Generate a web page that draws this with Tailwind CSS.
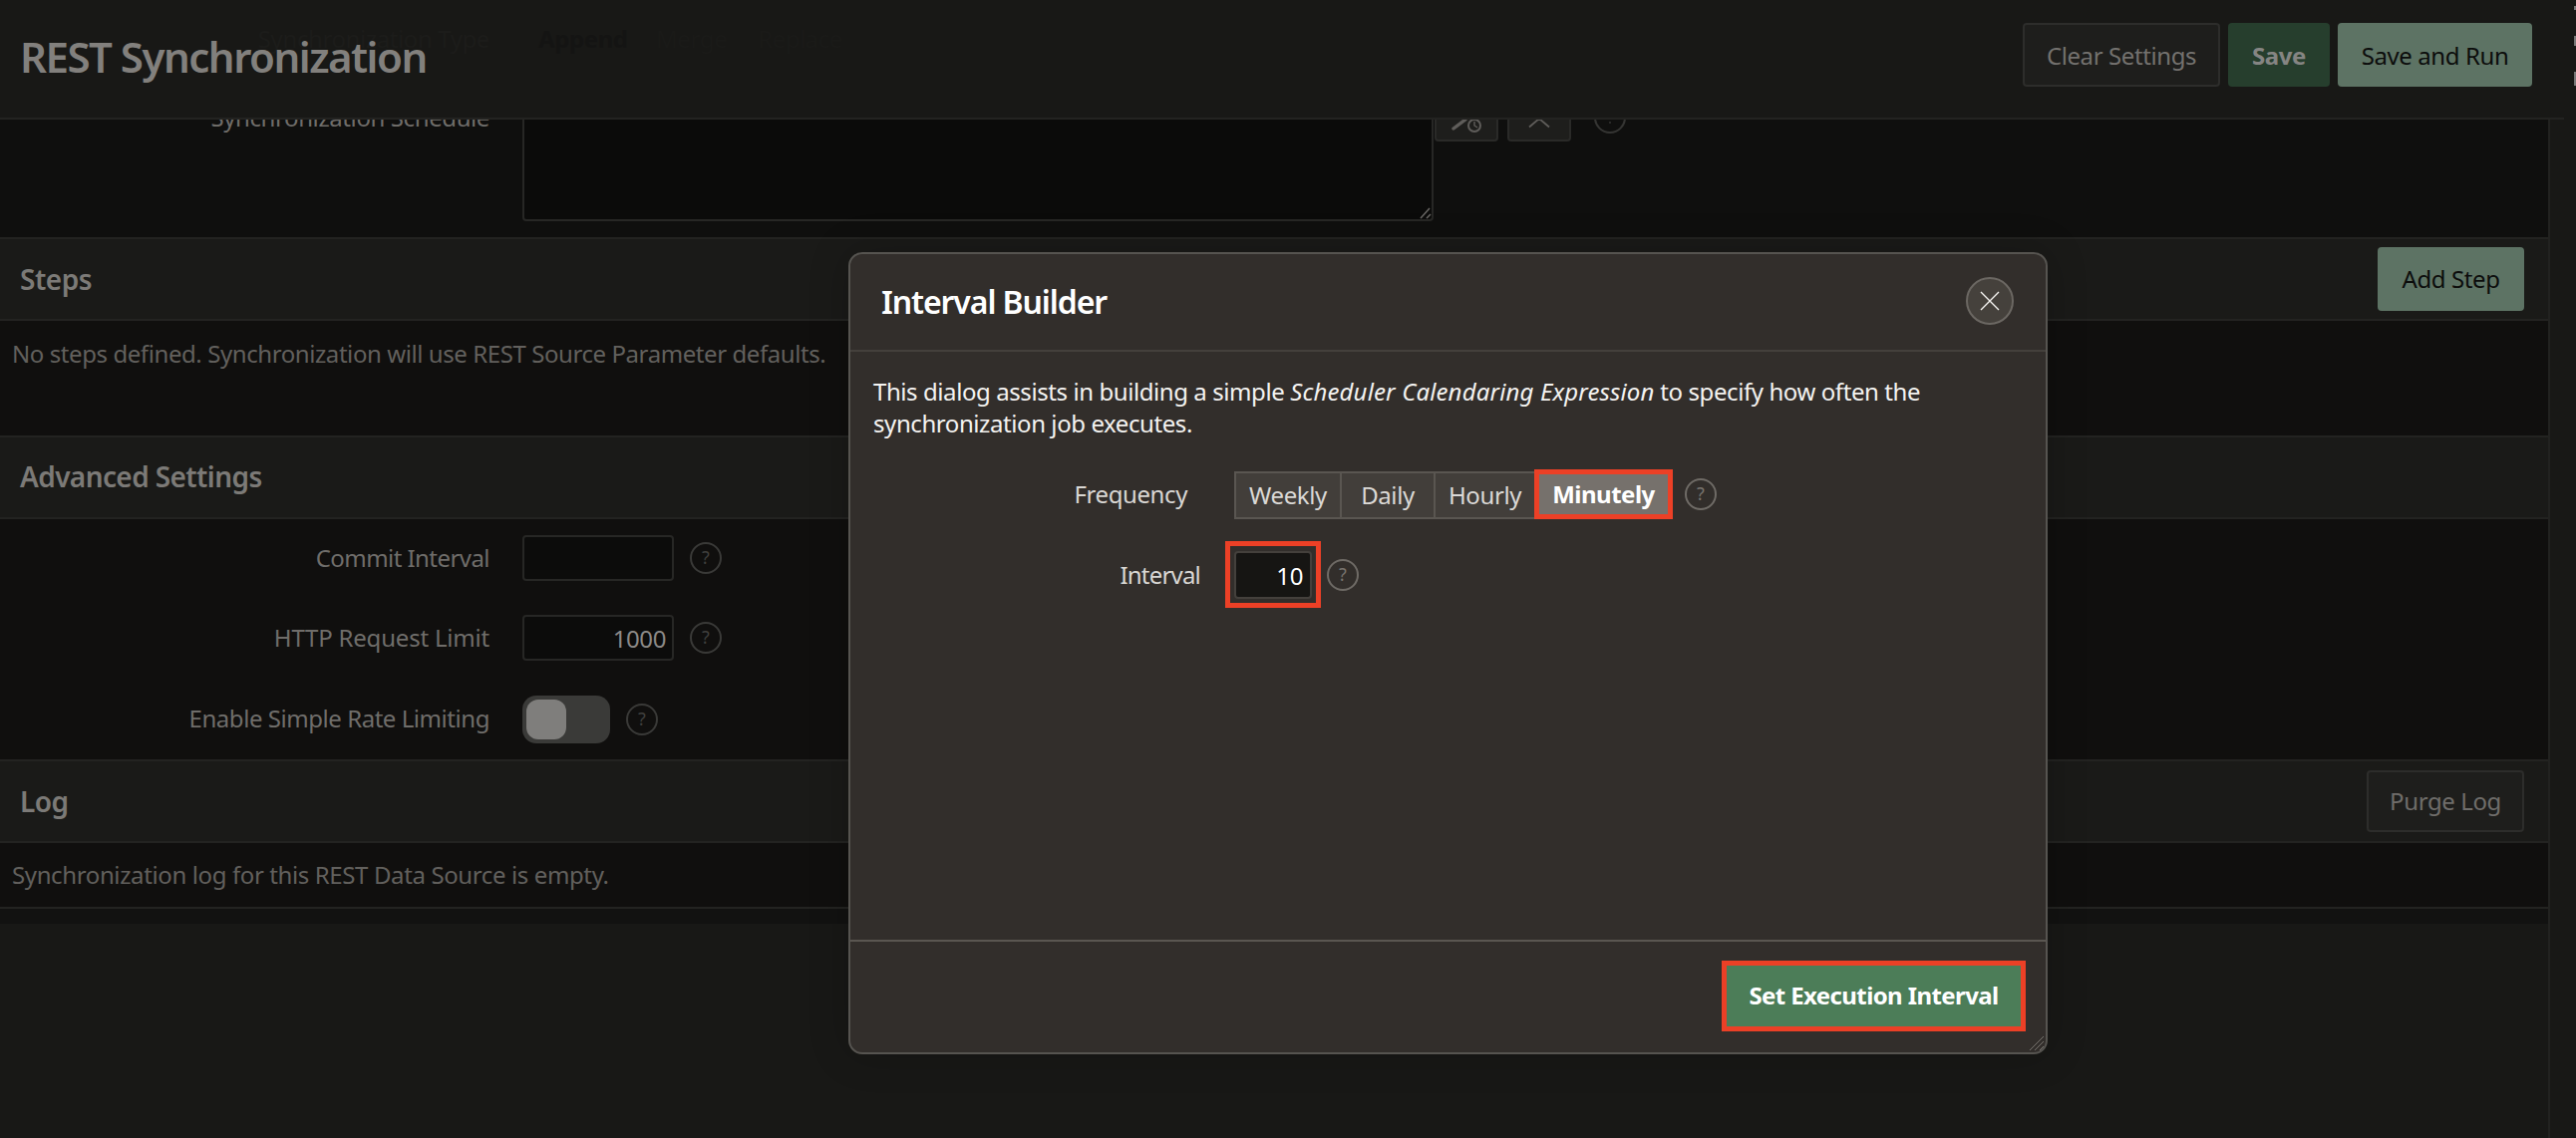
<!DOCTYPE html>
<html lang="en">
<head>
<meta charset="utf-8">
<title>Interval Builder</title>
<script src="https://cdn.jsdelivr.net/npm/@tailwindcss/browser@4"></script>
</head>
<body class="m-0 bg-[#181816] font-['Noto_Sans','Open_Sans',sans-serif]">
<div class="relative w-[2584px] h-[1142px] overflow-hidden bg-[#181816]">

  <!-- Page behind the dialog -->
  <main class="flex flex-col w-[2558px] h-[1142px] border-r-2 border-[#222220] bg-[#181816]">
    <div class="h-[120px] shrink-0"></div>

    <section class="h-[118px] shrink-0 bg-[#0f0f0e] flex">
      <div class="w-[491px] -mt-[14px] text-right text-[24px] leading-[24px] text-[#6f6d6a] tracking-[-0.4px]">Synchronization Schedule</div>
      <div class="ml-[33px] w-[914px] h-[102px] rounded-b-[4px] border-x-2 border-b-2 border-[#272725] bg-[#0b0b0a] relative">
        <svg class="absolute right-0 bottom-0" width="14" height="14" viewBox="0 0 14 14"><path d="M3 13 12 3M9 13l4-4" stroke="#6a6865" stroke-width="1.5"/></svg>
      </div>
      <div class="flex gap-[9px] ml-[1px] h-[22px]">
        <div class="w-[64px] h-full rounded-b-[4px] border-x-2 border-b-2 border-[#2a2a28] bg-[#1e1e1c] flex justify-center">
          <svg width="44" height="20" viewBox="0 0 44 20" fill="none" stroke="#5f5d5a" stroke-width="2"><path d="M9 9 21 0" stroke-width="3.4" stroke-linecap="round"/><circle cx="30" cy="6" r="6"/><path d="M30 2v4l3 2" stroke-width="1.4"/></svg>
        </div>
        <div class="w-[64px] h-full rounded-b-[4px] border-x-2 border-b-2 border-[#2a2a28] bg-[#1e1e1c] flex justify-center">
          <svg width="24" height="20" viewBox="0 0 24 20" fill="none" stroke="#5f5d5a" stroke-width="1.8"><path d="M2 7.500 12 -1l10 8.500"/></svg>
        </div>
        <svg class="ml-[14px]" width="32" height="22" viewBox="0 0 32 22" fill="none" stroke="#353533" stroke-width="2"><circle cx="16" cy="-2" r="15"/><circle cx="16" cy="3" r="1" fill="#353533" stroke="none"/></svg>
      </div>
    </section>

    <section class="h-[84px] shrink-0 bg-[#1a1a18] border-y-2 border-[#232321] flex items-center justify-between pl-[20px] pr-[24px]">
      <h2 class="text-[28px] font-semibold text-[#7c7a77] tracking-[-0.5px]">Steps</h2>
      <button class="w-[147px] h-[64px] pb-[1px] rounded-[4px] bg-[#5d7364] text-[24px] text-[#0c0d0c] tracking-[-0.4px]">Add Step</button>
    </section>
    <section class="h-[115px] shrink-0 bg-[#100f0e] pl-[12px] pt-[16px]">
      <p class="text-[24px] leading-[34px] text-[#62605d] tracking-[-0.42px]">No steps defined. Synchronization will use REST Source Parameter defaults.</p>
    </section>

    <section class="h-[84px] shrink-0 bg-[#1a1a18] border-y-2 border-[#232321] flex items-center pl-[20px] pb-[2px]">
      <h2 class="text-[28px] font-semibold text-[#7c7a77] tracking-[-0.6px]">Advanced Settings</h2>
    </section>
    <section class="h-[241px] shrink-0 bg-[#100f0e] pt-[16px] flex flex-col">
      <div class="flex items-center h-[46px]">
        <label class="w-[491px] text-right text-[24px] text-[#6f6d6a] tracking-[-0.55px]">Commit Interval</label>
        <div class="ml-[33px] w-[152px] h-[46px] rounded-[4px] border-2 border-[#272725] bg-[#0c0c0b]"></div>
        <svg class="ml-[16px]" width="32" height="32" viewBox="0 0 32 32" fill="none"><circle cx="16" cy="16" r="15" stroke="#3a3a38" stroke-width="2"/><text x="16" y="22" text-anchor="middle" font-size="18" fill="#3f3f3d" font-family="Noto Sans">?</text></svg>
      </div>
      <div class="flex items-center h-[46px] mt-[34px]">
        <label class="w-[491px] text-right text-[24px] text-[#6f6d6a] tracking-[-0.2px]">HTTP Request Limit</label>
        <div class="ml-[33px] w-[152px] h-[46px] rounded-[4px] border-2 border-[#272725] bg-[#0c0c0b] text-right pr-[6px] text-[24px] leading-[44px] text-[#8c8a87] tracking-[-0.4px]">1000</div>
        <svg class="ml-[16px]" width="32" height="32" viewBox="0 0 32 32" fill="none"><circle cx="16" cy="16" r="15" stroke="#3a3a38" stroke-width="2"/><text x="16" y="22" text-anchor="middle" font-size="18" fill="#3f3f3d" font-family="Noto Sans">?</text></svg>
      </div>
      <div class="flex items-center h-[48px] mt-[35px]">
        <label class="w-[491px] mb-[3px] text-right text-[24px] text-[#6f6d6a] tracking-[-0.45px]">Enable Simple Rate Limiting</label>
        <div class="ml-[33px] w-[88px] h-[48px] rounded-[14px] bg-[#3a3a38] p-[4px]">
          <div class="w-[40px] h-[40px] rounded-[12px] bg-[#7f7e7c]"></div>
        </div>
        <svg class="ml-[16px]" width="32" height="32" viewBox="0 0 32 32" fill="none"><circle cx="16" cy="16" r="15" stroke="#3a3a38" stroke-width="2"/><text x="16" y="22" text-anchor="middle" font-size="18" fill="#3f3f3d" font-family="Noto Sans">?</text></svg>
      </div>
    </section>

    <section class="h-[84px] shrink-0 bg-[#1a1a18] border-y-2 border-[#232321] flex items-center justify-between pl-[20px] pr-[24px]">
      <h2 class="text-[28px] font-semibold text-[#7c7a77] tracking-[-0.5px]">Log</h2>
      <button class="w-[158px] h-[62px] rounded-[4px] border-2 border-[#2d2d2b] bg-[#1e1e1c] text-[24px] text-[#6f6d6a] tracking-[-0.4px]">Purge Log</button>
    </section>
    <section class="h-[66px] shrink-0 bg-[#100f0e] border-b-2 border-[#232321] pl-[12px] pt-[15px]">
      <p class="text-[24px] leading-[34px] text-[#62605d] tracking-[-0.38px]">Synchronization log for this REST Data Source is empty.</p>
    </section>
    <div class="h-[15px] shrink-0 bg-[#121211]"></div>
  </main>

  <!-- Fixed header over the scrolled page -->
  <header class="absolute left-0 top-0 w-[2572px] h-[120px] bg-[#181816] border-b-2 border-[#232321] flex items-center justify-between pl-[20px] pr-[32px]">
    <div class="absolute left-[200px] top-[21px] w-[291px] whitespace-nowrap text-right text-[24px] text-[#1c1c1a] tracking-[-0.4px]">Synchronization Type</div>
    <div class="absolute left-[540px] top-[21px] flex text-[24px] tracking-[-0.4px]">
      <span class="w-[118px] font-bold text-[#141413]">Append</span>
      <span class="w-[102px] text-[#1a1a18]">Merge</span>
      <span class="text-[#1a1a18]">Replace</span>
    </div>
    <h1 class="relative text-[42px] font-semibold text-[#82807d] tracking-[-1.5px] leading-none -mt-[4px]">REST Synchronization</h1>
    <div class="flex gap-[8px] -mt-[8px]">
      <button class="w-[198px] h-[64px] pt-[1px] rounded-[4px] border-2 border-[#2d2d2b] bg-[#1e1e1c] text-[24px] text-[#73716e] tracking-[-0.4px]">Clear Settings</button>
      <button class="w-[102px] h-[64px] pt-[1px] rounded-[4px] bg-[#263e2d] text-[24px] font-bold text-[#858583] tracking-[-0.4px]">Save</button>
      <button class="w-[195px] h-[64px] pt-[1px] rounded-[4px] bg-[#5d7364] text-[24px] text-[#0c0d0c] tracking-[-0.4px]">Save and Run</button>
    </div>
  </header>

  <!-- Right edge clipped page text -->
  <div class="absolute left-[2582px] top-[6px] w-[2px] h-[160px] flex flex-col gap-[26px]">
    <span class="block w-[2px] h-[4px] bg-[#777]"></span>
    <span class="block w-[2px] h-[10px] bg-[#777]"></span>
    <span class="block w-[2px] h-[14px] bg-[#777]"></span>
  </div>

  <!-- Dialog -->
  <div role="dialog" class="absolute left-[851px] top-[253px] w-[1203px] h-[805px] rounded-[14px] border-2 border-[#565450] bg-[#322e2b] flex flex-col shadow-[0_0_40px_rgba(0,0,0,0.2)]">
    <div class="h-[98px] shrink-0 border-b-2 border-[#44403c] flex items-center justify-between pl-[31px] pr-[32px]">
      <h2 class="text-[32px] font-semibold text-white tracking-[-1.1px]">Interval Builder</h2>
      <button class="w-[48px] h-[48px] rounded-full border-2 border-[#6b6762] bg-[#45413c] flex items-center justify-center -mt-[2px]">
        <svg width="22" height="22" viewBox="0 0 22 22" fill="none" stroke="#f2f1ef" stroke-width="1.4"><path d="m2 2 18 18M20 2 2 20"/></svg>
      </button>
    </div>
    <div class="flex-1 pl-[23px] pr-[32px] pt-[24px]">
      <p class="text-[24px] leading-[32px] text-[#f4f3f1] tracking-[-0.42px]">This dialog assists in building a simple <em class="tracking-[0.14px]">Scheduler Calendaring Expression</em> to specify how often the<br>synchronization job executes.</p>
      <div class="flex items-center h-[50px] mt-[30px]">
        <label class="w-[315px] text-right text-[24px] text-[#d9d7d4] tracking-[-0.4px]">Frequency</label>
        <div class="ml-[47px] flex items-stretch h-[50px]">
          <div class="mt-[2px] h-[48px] flex border-2 border-r-0 border-[#5a5651] bg-[#423e3a] text-[24px] text-[#dbd9d6] tracking-[-0.4px]">
            <span class="w-[106px] flex items-center justify-center border-r-2 border-[#5a5651]">Weekly</span>
            <span class="w-[94px] flex items-center justify-center border-r-2 border-[#5a5651]">Daily</span>
            <span class="w-[99px] flex items-center justify-center">Hourly</span>
          </div>
          <span class="w-[139px] h-[50px] border-[5px] border-[#ec4026] bg-[#76716c] flex items-center justify-center text-[24px] font-bold text-white tracking-[-0.5px]">Minutely</span>
        </div>
        <svg class="ml-[12px]" width="32" height="32" viewBox="0 0 32 32" fill="none"><circle cx="16" cy="16" r="15" stroke="#6f6b66" stroke-width="2"/><text x="16" y="22" text-anchor="middle" font-size="18" fill="#77736e" font-family="Noto Sans">?</text></svg>
      </div>
      <div class="flex items-center h-[67px] mt-[22px]">
        <label class="w-[328px] text-right text-[24px] text-[#d9d7d4] tracking-[-0.8px]">Interval</label>
        <div class="ml-[25px] w-[96px] h-[67px] border-[5px] border-[#ec4026] flex items-center justify-start pl-[4px]">
          <div class="w-[78px] h-[48px] rounded-[4px] border-2 border-[#44403c] bg-[#161513] text-right pr-[7px] text-[24px] leading-[46px] text-white tracking-[-0.4px]">10</div>
        </div>
        <svg class="ml-[6px]" width="32" height="32" viewBox="0 0 32 32" fill="none"><circle cx="16" cy="16" r="15" stroke="#6f6b66" stroke-width="2"/><text x="16" y="22" text-anchor="middle" font-size="18" fill="#77736e" font-family="Noto Sans">?</text></svg>
      </div>
    </div>
    <div class="h-[113px] shrink-0 border-t-2 border-[#5a5651] relative flex items-start justify-end pr-[20px] pt-[19px]">
      <button class="w-[305px] h-[71px] pb-[2px] border-[5px] border-[#ec4026] bg-[#4c7d58] text-[24px] font-bold text-white tracking-[-0.6px]">Set Execution Interval</button>
      <svg class="absolute right-[1px] bottom-[1px]" width="16" height="16" viewBox="0 0 16 16" fill="none" stroke="#77736e" stroke-width="1"><path d="M1 15 15 1M6 15 15 6M11 15l4-4"/></svg>
    </div>
  </div>
</div>
</body>
</html>
